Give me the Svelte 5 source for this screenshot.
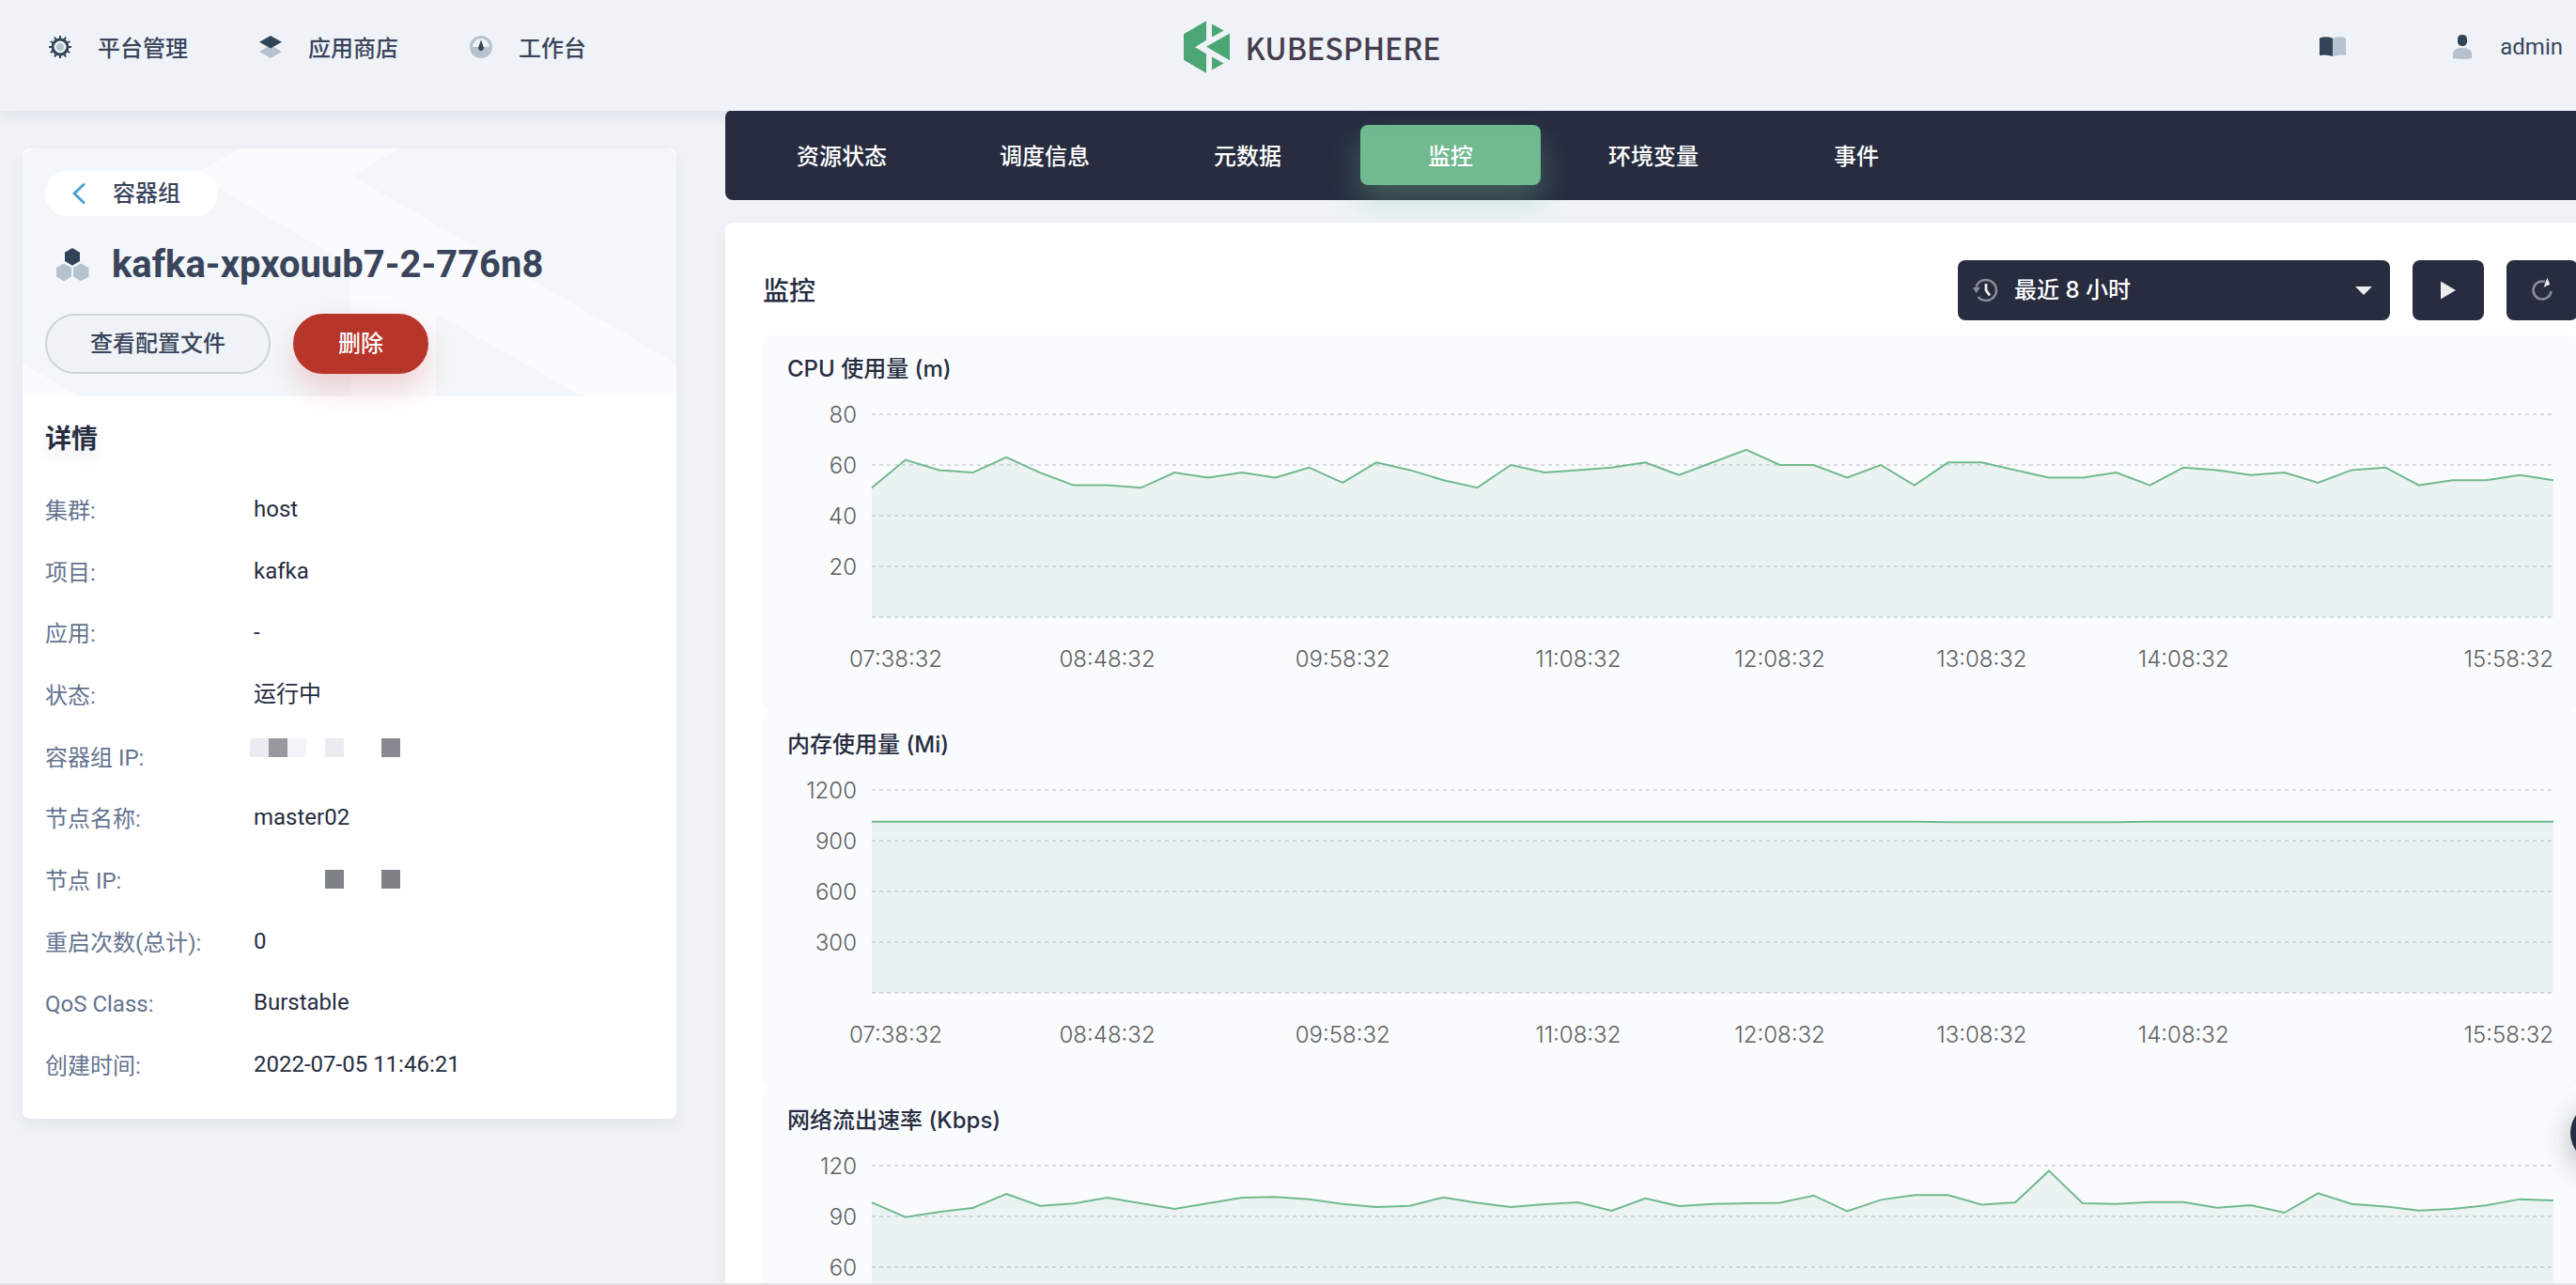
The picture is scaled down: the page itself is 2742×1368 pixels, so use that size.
<script>
  const details = [
    { label: '集群', value: 'host' },
    { label: '项目', value: 'kafka' },
    { label: '应用', value: '-' },
    { label: '状态', value: '运行中' },
    { label: '容器组 IP', mask: ['a', 'b', 'c', '', 'a', '', '', 'd'] },
    { label: '节点名称', value: 'master02' },
    { label: '节点 IP', mask: ['', '', '', '', 'e', '', '', 'e'], centered: true },
    { label: '重启次数(总计)', value: '0' },
    { label: 'QoS Class', value: 'Burstable' },
    { label: '创建时间', value: '2022-07-05 11:46:21' }
  ];

  const tabs = ['资源状态', '调度信息', '元数据', '监控', '环境变量', '事件'];
  let activeTab = $state('监控');
  let range = $state('8');

  const times = [
    { at: 7, text: '08:48:32' },
    { at: 14, text: '09:58:32' },
    { at: 21, text: '11:08:32' },
    { at: 27, text: '12:08:32' },
    { at: 33, text: '13:08:32' },
    { at: 39, text: '14:08:32' }
  ];

  const charts = [
    {
      title: 'CPU 使用量 (m)',
      step: 20,
      data: [
        51, 62, 58, 57, 63, 57, 52, 52, 51, 57, 55, 57, 55, 59, 53, 61, 58, 54, 51, 60, 57, 58, 59, 61, 56, 61,
        66, 60, 60, 55, 60, 52, 61, 61, 58, 55, 55, 57, 52, 59, 58, 56, 57, 53, 58, 59, 52, 54, 54, 56, 54
      ]
    },
    {
      title: '内存使用量 (Mi)',
      step: 300,
      data: Array.from({ length: 51 }, (_, i) => (i > 31 && i < 38 ? 1010 : 1012))
    },
    {
      title: '网络流出速率 (Kbps)',
      step: 30,
      data: [
        98.3, 89.6, 92.6, 95, 103.3, 96.3, 97.6, 101.1, 97.8, 94.4, 97.8, 101.1, 101.5, 100.2, 97.4, 95.6, 96.3,
        101.3, 98, 95.6, 97.2, 98.3, 93.3, 100.7, 96.1, 97.4, 97.8, 98.1, 102.4, 93.1, 99.8, 102.6, 102.6, 96.9,
        98.3, 117, 97.8, 97.4, 98.5, 98.5, 95.2, 96.7, 92.2, 103.7, 97.4, 95.9, 93.5, 94.4, 96.5, 100.2, 99.4
      ]
    }
  ];

  const plotHeight = 216;
  const linePoints = (c) => c.data.map((v, i) => `${i},${plotHeight - (v / (c.step * 4)) * plotHeight}`).join(' ');
  const teeth = Array.from({ length: 12 }, (_, i) => i * 30);
</script>

<div class="page">
  <header class="topbar">
    <nav class="nav">
      <a href="#platform">
        <svg width="24" height="24" viewBox="-12 -12 24 24" aria-hidden="true">
          {#each teeth as angle}
            <rect x="-1" y="-12" width="2" height="4" fill="#324558" transform="rotate({angle})" />
          {/each}
          <circle r="8" fill="none" stroke="#324558" stroke-width="3" />
          <circle r="4" fill="#b6c2cd" />
        </svg>
        <span>平台管理</span>
      </a>
      <a href="#store">
        <svg width="24" height="24" viewBox="0 0 24 24" aria-hidden="true">
          <path d="M12 10 24 17 12 24 0 17z" fill="#b6c2cd" />
          <path d="M12 0 24 6.7 12 13.5 0 6.7z" fill="#324558" />
        </svg>
        <span>应用商店</span>
      </a>
      <a href="#workbench">
        <svg width="24" height="24" viewBox="0 0 24 24" aria-hidden="true">
          <circle cx="12" cy="12" r="12" fill="#b6c2cd" />
          <path d="M3 12a9 9 0 0 1 18 0z" fill="#eff3f8" />
          <path d="M12 4.500 14.800 12.500a2.900 2.900 0 1 1-5.600 0z" fill="#324558" />
        </svg>
        <span>工作台</span>
      </a>
    </nav>
    <a class="logo" href="#home" aria-label="KubeSphere">
      <svg width="49" height="56" viewBox="126 68 147 167" fill="#4ca574" aria-hidden="true">
        <path d="M126 110 198 68V130L162 152 198 173V235L126 193z" />
        <path d="M216 78 254 99 216 120z" />
        <path d="M198 151 273 108V194z" />
        <path d="M216 183 254 204 216 225z" />
      </svg>
      <span>KUBESPHERE</span>
    </a>
    <div class="account">
      <button class="plain" aria-label="文档">
        <svg width="28" height="22" viewBox="0 0 28 22" aria-hidden="true">
          <path d="M0 1.500Q7-1 14 1.800V21Q7 18.500 0 20z" fill="#324558" />
          <path d="M28 1.500Q21-1 14 1.800V21Q21 18.500 28 20z" fill="#b6c2cd" />
        </svg>
      </button>
      <button class="plain user">
        <svg width="20" height="26" viewBox="0 0 20 26" aria-hidden="true">
          <rect x="5" y="0" width="10" height="12" rx="4.500" fill="#324558" />
          <path d="M0 19.500Q1 14 10 14T20 19.500V25Q10 27 0 25z" fill="#b6c2cd" />
        </svg>
        admin
      </button>
    </div>
  </header>

  <div class="body">
    <aside class="card">
      <div class="hero">
        <svg class="pattern" viewBox="0 0 696 264" preserveAspectRatio="none" fill="#fafbfd" aria-hidden="true">
          <path d="M231 0H402L350 29 696 229V264H596L440 176V264H350V124L183 28z" />
          <path d="M0 229 61 264H0z" />
        </svg>
        <a class="back" href="#pods">
          <svg width="16" height="24" viewBox="0 0 16 24" aria-hidden="true">
            <path d="M13 2.500 3 12 13 21.500" fill="none" stroke="#4a9fd1" stroke-width="3" stroke-linecap="round" stroke-linejoin="round" />
          </svg>
          容器组
        </a>
        <h1>
          <svg width="36" height="36" viewBox="0 0 36 36" aria-hidden="true">
            <path d="M18 0 26 4.700V14L18 18.700 10 14V4.700z" fill="#324558" />
            <path d="M9 16.500 17 21V30.500L9 35.200 1 30.500V21z" fill="#b6c2cd" />
            <path d="M27 16.500 35.500 21V30.500L27 35.200 19 30.500V21z" fill="#b6c2cd" />
          </svg>
          kafka-xpxouub7-2-776n8
        </h1>
        <div class="actions">
          <button class="pill">查看配置文件</button>
          <button class="pill danger">删除</button>
        </div>
      </div>
      <section class="details">
        <h2>详情</h2>
        <dl>
          {#each details as d}
            <div class="row">
              <dt>{d.label}:</dt>
              <dd>
                {#if d.mask}
                  <span class="mask" class:centered={d.centered}>
                    {#each d.mask as tone}<i class={tone}></i>{/each}
                  </span>
                {:else}
                  {d.value}
                {/if}
              </dd>
            </div>
          {/each}
        </dl>
      </section>
    </aside>

    <main>
      <div class="tabs" role="tablist">
        {#each tabs as t}
          <button role="tab" aria-selected={activeTab === t} class:active={activeTab === t} onclick={() => (activeTab = t)}>{t}</button>
        {/each}
      </div>

      <section class="panel">
        <div class="toolbar">
          <h2>监控</h2>
          <div class="range">
            <svg class="clock" width="28" height="28" viewBox="-14 -14 28 28" aria-hidden="true">
              <path d="M-10.500-3.500A11 11 0 1 1-8.500 7" fill="none" stroke="#8a8e97" stroke-width="2.500" />
              <path d="M-14-3H-6L-10.500 3z" fill="#8a8e97" />
              <path d="M0-7V0L4 5.500" fill="none" stroke="#eceded" stroke-width="2.800" />
            </svg>
            <select bind:value={range} aria-label="时间范围">
              <option value="8">最近 8 小时</option>
              <option value="12">最近 12 小时</option>
              <option value="24">最近 24 小时</option>
            </select>
            <svg class="caret" width="18" height="9" viewBox="0 0 18 9" aria-hidden="true">
              <path d="M0 0H18L9 9z" fill="#eceded" />
            </svg>
          </div>
          <button class="tool" aria-label="开始">
            <svg width="32" height="32" viewBox="-16 -16 32 32" aria-hidden="true">
              <path d="M-8-9.500 8 0-8 9.500z" fill="#eceded" />
            </svg>
          </button>
          <button class="tool" aria-label="刷新">
            <svg width="32" height="32" viewBox="-16 -16 32 32" aria-hidden="true">
              <path d="M9.500 1A9.500 9.500 0 1 1 3-9" fill="none" stroke="#8a8e97" stroke-width="2.500" />
              <path d="M5.300-13.300 8.300-6.300 1.700-3.300z" fill="#eceded" />
            </svg>
          </button>
        </div>

        {#each charts as c}
          <figure>
            <figcaption>{c.title}</figcaption>
            <svg class="plot" width="100%" height="276" role="img" aria-label={c.title}>
              {#each [0, 1, 2, 3, 4] as k}
                <line x1="0" x2="100%" y1={k * 54} y2={k * 54} class="grid" />
                {#if k < 4}
                  <text x="-16" y={k * 54 + 9} text-anchor="end">{c.step * (4 - k)}</text>
                {/if}
              {/each}
              <svg width="100%" height="216" viewBox="0 0 50 216" preserveAspectRatio="none" overflow="visible">
                <polygon points="0,216 {linePoints(c)} 50,216" class="area" />
                <polyline points={linePoints(c)} class="line" />
              </svg>
              <text x="-24" y="269">07:38:32</text>
              {#each times as t}
                <text x="{t.at * 2}%" y="269" text-anchor="middle">{t.text}</text>
              {/each}
              <text x="100%" y="269" text-anchor="end">15:58:32</text>
            </svg>
          </figure>
        {/each}
      </section>
    </main>
  </div>

  <button class="fab" aria-label="工具箱"></button>
</div>

<style>
  :global(body) {
    background: #eff3f8;
  }
  .page {
    position: relative;
    box-sizing: border-box;
    height: 100vh;
    overflow: hidden;
    border-bottom: 2px solid #e4e5e7;
    background: #eff3f8;
    color: #272d3f;
    font: 400 24px/40px Roboto, 'Noto Sans CJK SC', sans-serif;
  }
  button,
  select {
    font: inherit;
    cursor: pointer;
  }
  a {
    color: inherit;
    text-decoration: none;
  }
  h1,
  h2,
  dl,
  dd,
  figure {
    margin: 0;
  }
  svg {
    flex: none;
    display: block;
  }

  .topbar {
    position: relative;
    z-index: 2;
    display: grid;
    grid-template-columns: 1fr auto 1fr;
    align-items: center;
    box-sizing: border-box;
    width: calc(100% + 52px);
    height: 118px;
    padding: 0 52px 18px;
    background: #eff3f8;
    box-shadow: 0 4px 16px rgba(36, 46, 66, 0.1);
    color: #3a445b;
  }
  .nav {
    display: flex;
    gap: 76px;
    font-weight: 500;
  }
  .nav a {
    display: flex;
    align-items: center;
    gap: 28px;
  }
  .nav span {
    padding-top: 4px;
  }
  .logo {
    display: flex;
    align-items: center;
    gap: 16px;
    color: #463d4f;
    font: 500 32px/56px 'Noto Sans CJK SC', sans-serif;
  }
  .account {
    display: flex;
    align-items: center;
    justify-content: flex-end;
    gap: 114px;
    padding-right: 14px;
  }
  .plain {
    display: flex;
    align-items: center;
    padding: 0;
    border: 0;
    background: none;
    color: #3a445b;
  }
  .user {
    gap: 30px;
  }

  .body {
    display: flex;
    align-items: flex-start;
    gap: 52px;
    padding-left: 24px;
  }
  .card {
    flex: none;
    width: 696px;
    margin-top: 40px;
    border-radius: 8px;
    background: #fff;
    box-shadow: 0 8px 16px rgba(36, 46, 66, 0.06);
  }
  .hero {
    position: relative;
    box-sizing: border-box;
    padding: 24px;
    border-radius: 12px 12px 0 0;
    background: #f3f7fa;
    color: #3a445b;
  }
  .pattern {
    position: absolute;
    inset: 0;
    width: 100%;
    height: 100%;
  }
  .back,
  h1,
  .actions {
    position: relative;
  }
  .back {
    display: inline-flex;
    align-items: center;
    gap: 28px;
    height: 48px;
    padding: 0 40px 0 28px;
    border-radius: 24px;
    background: #fff;
    font-weight: 500;
    vertical-align: top;
  }
  h1 {
    display: flex;
    align-items: center;
    gap: 24px;
    margin: 24px 0;
    padding-left: 11px;
    font-size: 40px;
    font-weight: 700;
    line-height: 56px;
  }
  .actions {
    display: flex;
    gap: 24px;
  }
  .pill {
    box-sizing: border-box;
    height: 64px;
    padding: 0 46px;
    border: 2px solid #ccd3db;
    border-radius: 32px;
    background: #eff3f8;
    color: #3a445b;
    font-weight: 500;
  }
  .danger {
    border-color: #b8352a;
    background: #b8352a;
    color: #fff;
    box-shadow: 0 16px 32px rgba(202, 38, 33, 0.2);
  }

  .details {
    padding: 26px 24px 22px;
  }
  h2 {
    font-size: 28px;
    font-weight: 700;
    line-height: 40px;
  }
  .details h2 {
    text-shadow: 0 8px 16px rgba(36, 46, 66, 0.1);
  }
  dl {
    display: grid;
    grid-auto-rows: 1fr;
    min-height: 657px;
    margin-top: 24px;
  }
  .row {
    display: grid;
    grid-template-columns: 222px 1fr;
    align-items: center;
  }
  dt {
    padding-bottom: 2px;
    color: #65738f;
  }
  dd {
    padding-bottom: 6px;
    color: #272d3f;
  }
  .mask {
    display: flex;
    margin: -18px 0 0 -4px;
  }
  .mask.centered {
    margin-top: 0;
  }
  .mask i {
    width: 20px;
    height: 20px;
  }
  .mask .a {
    background: #ebecf2;
  }
  .mask .b {
    background: #98999f;
  }
  .mask .c {
    background: #f3f4f7;
  }
  .mask .d {
    background: #868990;
  }
  .mask .e {
    background: #7f8286;
  }

  main {
    flex: 1;
    min-width: 0;
    margin: -1px -42px 0 0;
  }
  .tabs {
    display: flex;
    gap: 24px;
    padding: 16px 28px;
    border-radius: 8px;
    background: #272d3f;
  }
  .tabs button {
    width: 192px;
    height: 64px;
    padding: 4px 0 0;
    border: 0;
    border-radius: 8px;
    background: none;
    color: #fff;
    font-weight: 500;
  }
  .tabs .active {
    background: #71b98f;
    box-shadow: 0 16px 32px rgba(113, 185, 143, 0.36);
  }
  .panel {
    position: relative;
    margin-top: 24px;
    padding: 40px;
    border-radius: 8px;
    background: #fff;
    box-shadow: 0 8px 16px rgba(36, 46, 66, 0.06);
  }
  .toolbar {
    display: flex;
    align-items: center;
    gap: 24px;
    margin-bottom: 16px;
  }
  .toolbar h2 {
    flex: 1;
    padding-top: 4px;
    font-weight: 500;
  }
  .range {
    position: relative;
    width: 460px;
  }
  .range select {
    display: block;
    box-sizing: border-box;
    width: 100%;
    height: 64px;
    padding: 0 56px 0 60px;
    border: 0;
    border-radius: 8px;
    background: #272d3f;
    color: #fff;
    font-family: Inter, 'Noto Sans CJK SC', sans-serif;
    font-weight: 500;
    appearance: none;
  }
  .clock,
  .caret {
    position: absolute;
    pointer-events: none;
  }
  .clock {
    top: 18px;
    left: 16px;
  }
  .caret {
    top: 28px;
    right: 19px;
  }
  .tool {
    display: grid;
    place-items: center;
    width: 76px;
    height: 64px;
    padding: 0;
    border: 0;
    border-radius: 8px;
    background: #272d3f;
  }
  figure {
    box-sizing: border-box;
    height: 400px;
    padding: 16px 26px 0;
    border-radius: 8px;
    background: #fafbfd;
  }
  figcaption {
    font-family: Inter, 'Noto Sans CJK SC', sans-serif;
    font-weight: 500;
  }
  .plot {
    box-sizing: border-box;
    width: calc(100% - 90px);
    margin: 28px 0 0 90px;
    overflow: visible;
  }
  .plot text {
    fill: #5f6063;
    font: 300 24px Inter, sans-serif;
  }
  .grid {
    stroke: #d8dbe2;
    stroke-width: 2;
    stroke-dasharray: 4 4;
  }
  .area {
    fill: #71b98f;
    fill-opacity: 0.11;
  }
  .line {
    fill: none;
    stroke: #71b98f;
    stroke-width: 2;
    vector-effect: non-scaling-stroke;
  }
  .fab {
    position: absolute;
    right: -58px;
    bottom: 128px;
    width: 64px;
    height: 64px;
    padding: 0;
    border: 0;
    border-radius: 50%;
    background: #242e42;
    box-shadow: 0 8px 32px rgba(36, 46, 66, 0.35);
  }
</style>
